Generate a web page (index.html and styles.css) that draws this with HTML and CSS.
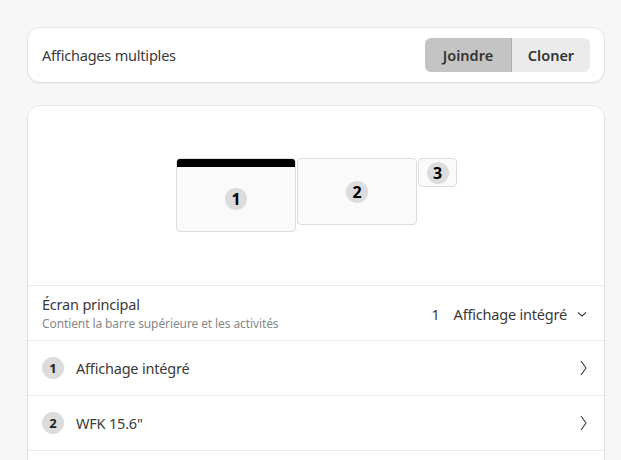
FILE: index.html
```html
<!DOCTYPE html>
<html lang="fr">
<head>
<meta charset="utf-8">
<link rel="stylesheet" href="styles.css">
</head>
<body>
<div class="page">
  <div class="card top">
    <span class="label">Affichages multiples</span>
    <div class="seg">
      <button class="seg-btn active">Joindre</button>
      <button class="seg-btn">Cloner</button>
    </div>
  </div>

  <div class="card main">
    <div class="arrange">
      <div class="mon mon1"><div class="bar"></div><div class="mon-body"><span class="badge">1</span></div></div>
      <div class="mon mon2"><span class="badge">2</span></div>
      <div class="mon mon3"><span class="badge">3</span></div>
    </div>
    <div class="row primary">
      <div class="texts">
        <div class="title">Écran principal</div>
        <div class="sub">Contient la barre supérieure et les activités</div>
      </div>
      <div class="select">
        <span class="num">1</span>
        <span>Affichage intégré</span>
        <svg width="12" height="12" viewBox="0 0 12 12"><path d="M2 4.5 L6 8 L10 4.5" fill="none" stroke="#3d3d3d" stroke-width="1.1"/></svg>
      </div>
    </div>
    <div class="row item">
      <span class="badge small">1</span>
      <span class="name">Affichage intégré</span>
      <svg class="chev" width="10" height="18" viewBox="0 0 10 18"><path d="M3 2 L8 9 L3 16" fill="none" stroke="#3d3d3d" stroke-width="1.1"/></svg>
    </div>
    <div class="row item">
      <span class="badge small">2</span>
      <span class="name">WFK 15.6"</span>
      <svg class="chev" width="10" height="18" viewBox="0 0 10 18"><path d="M3 2 L8 9 L3 16" fill="none" stroke="#3d3d3d" stroke-width="1.1"/></svg>
    </div>
    <div class="row item"></div>
  </div>
</div>
</body>
</html>
```
FILE: styles.css
```css
* { box-sizing: border-box; }
html, body { margin: 0; padding: 0; }
body {
  background: #f7f7f7;
  font-family: "Noto Sans", "Open Sans", sans-serif;
  color: #3a3a3a;
  overflow: hidden;
  height: 460px;
}
.page {
  padding: 28px 17px 0 28px;
  display: flex;
  flex-direction: column;
  gap: 24px;
}
.card {
  background: #fff;
  border-radius: 12px;
  box-shadow: 0 0 0 1px rgba(0,0,0,0.05), 0 1px 3px rgba(0,0,0,0.08);
}
.top {
  height: 54px;
  display: flex;
  align-items: center;
  justify-content: space-between;
  padding: 0 14px 0 14px;
}
.label { font-size: 14.5px; letter-spacing: -0.2px; }
.seg { display: flex; border-radius: 6px; overflow: hidden; }
.seg-btn {
  font-family: inherit;
  font-size: 14.5px;
  font-weight: 600;
  color: #333;
  border: none;
  height: 34px;
  padding: 0;
  background: #ebebeb;
  width: 78px;
}
.seg-btn.active { background: #c4c4c4; width: 87px; border-right: 1px solid #adadad; }
.main { overflow: hidden; }
.arrange {
  height: 180px;
  display: flex;
  align-items: flex-start;
  justify-content: flex-start;
  padding: 52px 0 0 148px;
  gap: 1px;
  border-bottom: 1px solid #ebebeb;
}
.mon {
  background: #fafafa;
  border: 1px solid #dcdcdc;
  border-radius: 4px;
  display: flex;
  align-items: center;
  justify-content: center;
}
.mon1 { width: 120px; height: 74px; flex-direction: column; align-items: stretch; overflow: hidden; }
.bar { height: 8px; background: #000; }
.mon-body { flex: 1; display: flex; align-items: center; justify-content: center; }
.mon2 { width: 120px; height: 67px; }
.mon3 { width: 39px; height: 29px; }
.badge {
  width: 22px; height: 22px;
  border-radius: 50%;
  background: #dcdcdc;
  color: #000;
  font-weight: 700;
  font-size: 16px;
  display: flex;
  align-items: center;
  justify-content: center;
  line-height: 1;
}
.badge.small { font-size: 13px; color: #222; }
.row {
  height: 55px;
  border-bottom: 1px solid #ebebeb;
  display: flex;
  align-items: center;
  padding: 0 14px;
}
.primary { justify-content: space-between; }
.title { font-size: 14.5px; letter-spacing: -0.2px; }
.sub { font-size: 12px; color: #888; margin-top: 1px; letter-spacing: -0.1px; }
.select { display: flex; align-items: center; font-size: 14.5px; letter-spacing: -0.2px; margin-top: 1px; }
.select .num { margin-right: 14px; }
.select svg { margin-left: 9px; margin-right: 2px; }
.item { gap: 12px; }
.name { flex: 1; font-size: 14.5px; letter-spacing: -0.2px; }
.chev { margin-right: 2px; }
```
